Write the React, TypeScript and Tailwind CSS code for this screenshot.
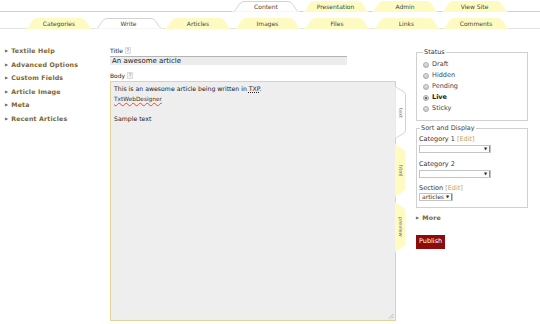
import React from 'react';

const topTabs = ['Content', 'Presentation', 'Admin', 'View Site'];
const subTabs = ['Categories', 'Write', 'Articles', 'Images', 'Files', 'Links', 'Comments'];
const sideLinks = ['Textile Help', 'Advanced Options', 'Custom Fields', 'Article Image', 'Meta', 'Recent Articles'];
const statuses = ['Draft', 'Hidden', 'Pending', 'Live', 'Sticky'];

function Tab({ label, active }: { label: string; active?: boolean }) {
  return (
    <div className={`relative -mb-px flex h-[11px] w-[68px] items-center justify-center text-[6px] text-[#444] ${active ? 'z-10' : ''}`}>
      <svg className="absolute inset-0" width="68" height="11" viewBox="0 0 68 11" preserveAspectRatio="none">
        {active ? (
          <path d="M0 11 C5 11 6 0.5 12 0.5 H56 C62 0.5 63 11 68 11 Z" fill="#fff" stroke="#c8c8c8" strokeWidth="0.8" />
        ) : (
          <path d="M0 11 C5 11 6 0 12 0 H56 C62 0 63 11 68 11 Z" fill="#fdfbc2" />
        )}
        {active && <rect x="0" y="10.4" width="68" height="1" fill="#fff" />}
      </svg>
      <span className="relative">{label}</span>
    </div>
  );
}

function SideTab({ label, active, h }: { label: string; active?: boolean; h: number }) {
  return (
    <div className="relative -ml-px flex w-[11px] items-center justify-center" style={{ height: h }}>
      <svg className="absolute inset-0" width="11" height={h} viewBox={`0 0 11 ${h}`} preserveAspectRatio="none">
        {active ? (
          <path d={`M0 0 C0 4 10.5 5 10.5 10 V${h - 10} C10.5 ${h - 5} 0 ${h - 4} 0 ${h} Z`} fill="#fff" stroke="#c8c8c8" strokeWidth="0.8" />
        ) : (
          <path d={`M0 0 C0 4 10.5 5 10.5 10 V${h - 10} C10.5 ${h - 5} 0 ${h - 4} 0 ${h} Z`} fill="#fdfbc2" />
        )}
      </svg>
      <span className="relative text-[5px] text-[#666] [writing-mode:vertical-rl]">{label}</span>
    </div>
  );
}

function Help() {
  return (
    <span className="ml-[2px] inline-flex h-[7px] w-[6px] items-center justify-center border border-[#ddd] bg-[#f4f4f4] text-[5px] leading-none text-[#8877bb]">?</span>
  );
}

function Radio({ checked }: { checked?: boolean }) {
  return (
    <span className="flex h-[6px] w-[6px] items-center justify-center rounded-full border border-[#aaa] bg-gradient-to-b from-[#e4e4e4] to-[#c8c8c8]">
      {checked && <span className="h-[2px] w-[2px] rounded-full bg-[#444]" />}
    </span>
  );
}

function Select({ w, text }: { w: number; text?: string }) {
  return (
    <div className="flex h-[8px] items-center border border-[#c4c4c4] bg-white" style={{ width: w }}>
      <span className="flex-1 pl-[2px] text-[6px] leading-none text-[#333]">{text}</span>
      <span className="pr-[2px] text-[4px] leading-none text-[#222]">▼</span>
      <span className="h-full w-px bg-[#888]" />
    </div>
  );
}

export default function App() {
  return (
    <div className="h-[324px] w-[540px] overflow-hidden bg-white font-['DejaVu_Sans',sans-serif] text-[#333]">
      <div className="flex border-b border-[#cfcfcf] pl-[232px] pt-px">
        {topTabs.map((t, i) => (
          <div key={t} className="mr-[1.5px]">
            <Tab label={t} active={i === 0} />
          </div>
        ))}
      </div>
      <div className="mt-[6px] flex border-b border-[#e2e2e2] pl-[25px]">
        {subTabs.map((t, i) => (
          <div key={t} className="mr-[1.5px]">
            <Tab label={t} active={i === 1} />
          </div>
        ))}
      </div>

      <div className="flex pt-[18px]">
        <div className="flex w-[110px] flex-col gap-[6.5px] pl-[5px]">
          {sideLinks.map((l) => (
            <div key={l} className="flex items-center text-[6.3px] font-bold leading-[7px] tracking-[0.15px] text-[#7d6533]">
              <span className="mr-[3px] text-[4px] text-[#666]">▶</span>
              {l}
            </div>
          ))}
        </div>

        <div className="flex w-[306px] flex-col">
          <div className="flex items-center text-[6px] leading-[7px] text-[#222]">
            Title <Help />
          </div>
          <div className="mt-[2px] h-[9px] w-[237px] border-t border-[#b4b4b4] bg-[#ececec] pl-[2px] text-[7px] leading-[8px] text-[#222]">
            An awesome article
          </div>
          <div className="mt-[7px] flex items-center text-[6px] leading-[7px] text-[#222]">
            Body <Help />
          </div>
          <div className="mt-[2px] flex">
            <div className="relative h-[240px] w-[286px] border border-[#e3d39a] bg-[#eeeeee] px-[3px] pt-[2px] text-[6.2px] leading-[10px] text-[#222]">
              <div>
                This is an awesome article being written in <span className="underline decoration-dotted">TXP</span>.
              </div>
              <div>
                <span className="text-[5.8px] text-[#333] underline decoration-wavy decoration-[#e44]">TxtWebDesigner</span>
              </div>
              <div className="h-[10px]" />
              <div>Sample text</div>
              <svg className="absolute bottom-[1px] right-[1px]" width="6" height="6" viewBox="0 0 6 6">
                <path d="M1 5.5 L5.5 1 M3.5 5.5 L5.5 3.5" stroke="#999" strokeWidth="0.6" />
              </svg>
            </div>
            <div className="mt-[4px] flex flex-col gap-[3px]">
              <SideTab label="text" active h={55} />
              <SideTab label="html" h={55} />
              <SideTab label="preview" h={52} />
            </div>
          </div>
        </div>

        <div className="mt-[2px] flex w-[112px] flex-col">
          <fieldset className="h-[72px] border border-[#d0d0d0] px-[6px] pb-[4px]">
            <legend className="px-px text-[6.5px] leading-[7px] text-[#333]">Status</legend>
            <div className="mt-[5px] flex flex-col gap-[4px]">
              {statuses.map((s) => (
                <div key={s} className="flex items-center gap-[3px]">
                  <Radio checked={s === 'Live'} />
                  <span className={`text-[6.5px] leading-[7px] ${s === 'Live' ? 'font-bold text-[#222]' : 'text-[#444]'}`}>{s}</span>
                </div>
              ))}
            </div>
          </fieldset>

          <fieldset className="mt-[4px] h-[83px] border border-[#d0d0d0] px-[2px]">
            <legend className="ml-[1px] px-px text-[6.5px] leading-[7px] text-[#444]">Sort and Display</legend>
            <div className="mt-[4px] text-[6.5px] leading-[7px] text-[#333]">
              Category 1 <span className="text-[#c2a35c]">[Edit]</span>
            </div>
            <div className="mt-[2px]">
              <Select w={72} />
            </div>
            <div className="mt-[8px] text-[6.5px] leading-[7px] text-[#333]">Category 2</div>
            <div className="mt-[2px]">
              <Select w={72} />
            </div>
            <div className="mt-[7px] text-[6.5px] leading-[7px] text-[#333]">
              Section <span className="text-[#c2a35c]">[Edit]</span>
            </div>
            <div className="mt-[1px]">
              <Select w={34} text="articles" />
            </div>
          </fieldset>

          <div className="mt-[6px] flex items-center text-[6.3px] font-bold leading-[7px] tracking-[0.15px] text-[#7d6533]">
            <span className="mr-[3px] text-[4px] text-[#666]">▶</span>
            More
          </div>
          <div className="mt-[5px]">
            <span className="inline-flex h-[14px] items-center bg-[#8c0c0c] px-[3px] text-[6.5px] text-white">Publish</span>
          </div>
        </div>
      </div>
    </div>
  );
}
